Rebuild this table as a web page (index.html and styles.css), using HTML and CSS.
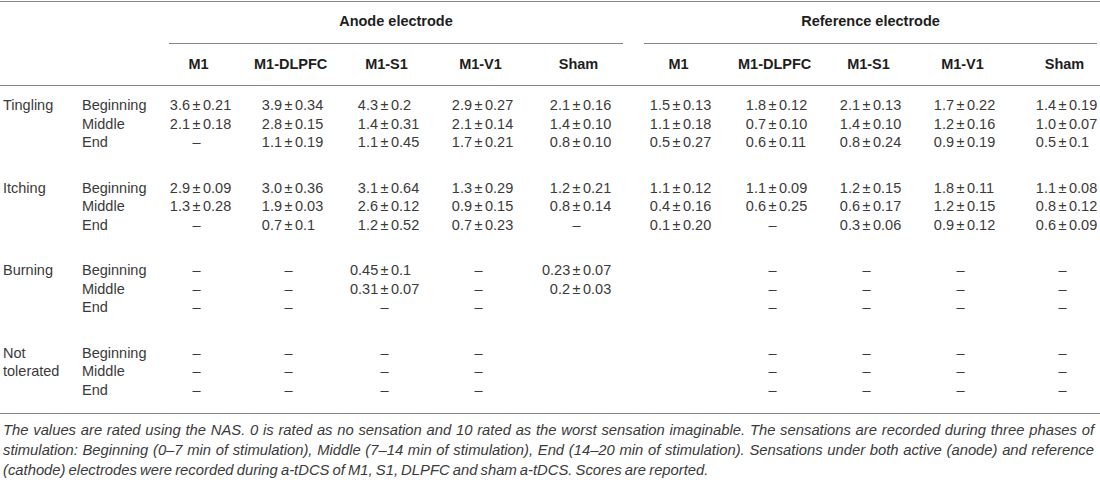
FILE: index.html
```html
<!DOCTYPE html>
<html>
  <head>
    <meta charset="UTF-8">
    <link rel="stylesheet" href="styles.css">
  </head>
  <body>
    <main>
      <table class="sensations">
        <colgroup>
          <col><col><col><col><col><col><col><col><col><col><col><col>
        </colgroup>
        <thead>
          <tr class="groups">
            <th colspan="2"></th>
            <th colspan="5" class="anode"><div>Anode electrode</div></th>
            <th colspan="5" class="reference"><div>Reference electrode</div></th>
          </tr>
          <tr class="sites">
            <th></th>
            <th></th>
            <th><span>M1</span></th>
            <th><span>M1-DLPFC</span></th>
            <th><span>M1-S1</span></th>
            <th><span>M1-V1</span></th>
            <th><span>Sham</span></th>
            <th><span>M1</span></th>
            <th><span>M1-DLPFC</span></th>
            <th><span>M1-S1</span></th>
            <th><span>M1-V1</span></th>
            <th><span>Sham</span></th>
          </tr>
        </thead>
        <tbody>
          <tr>
            <td rowspan="3" class="sense">Tingling</td>
            <td class="phase">Beginning</td>
            <td><span class="n">3.6</span> ± 0.21</td>
            <td><span class="n">3.9</span> ± 0.34</td>
            <td><span class="n">4.3</span> ± 0.2</td>
            <td><span class="n">2.9</span> ± 0.27</td>
            <td><span class="n">2.1</span> ± 0.16</td>
            <td><span class="n">1.5</span> ± 0.13</td>
            <td><span class="n">1.8</span> ± 0.12</td>
            <td><span class="n">2.1</span> ± 0.13</td>
            <td><span class="n">1.7</span> ± 0.22</td>
            <td><span class="n">1.4</span> ± 0.19</td>
          </tr>
          <tr>
            <td class="phase">Middle</td>
            <td><span class="n">2.1</span> ± 0.18</td>
            <td><span class="n">2.8</span> ± 0.15</td>
            <td><span class="n">1.4</span> ± 0.31</td>
            <td><span class="n">2.1</span> ± 0.14</td>
            <td><span class="n">1.4</span> ± 0.10</td>
            <td><span class="n">1.1</span> ± 0.18</td>
            <td><span class="n">0.7</span> ± 0.10</td>
            <td><span class="n">1.4</span> ± 0.10</td>
            <td><span class="n">1.2</span> ± 0.16</td>
            <td><span class="n">1.0</span> ± 0.07</td>
          </tr>
          <tr>
            <td class="phase">End</td>
            <td><span class="n"></span> –</td>
            <td><span class="n">1.1</span> ± 0.19</td>
            <td><span class="n">1.1</span> ± 0.45</td>
            <td><span class="n">1.7</span> ± 0.21</td>
            <td><span class="n">0.8</span> ± 0.10</td>
            <td><span class="n">0.5</span> ± 0.27</td>
            <td><span class="n">0.6</span> ± 0.11</td>
            <td><span class="n">0.8</span> ± 0.24</td>
            <td><span class="n">0.9</span> ± 0.19</td>
            <td><span class="n">0.5</span> ± 0.1</td>
          </tr>
        </tbody>
        <tbody>
          <tr>
            <td rowspan="3" class="sense">Itching</td>
            <td class="phase">Beginning</td>
            <td><span class="n">2.9</span> ± 0.09</td>
            <td><span class="n">3.0</span> ± 0.36</td>
            <td><span class="n">3.1</span> ± 0.64</td>
            <td><span class="n">1.3</span> ± 0.29</td>
            <td><span class="n">1.2</span> ± 0.21</td>
            <td><span class="n">1.1</span> ± 0.12</td>
            <td><span class="n">1.1</span> ± 0.09</td>
            <td><span class="n">1.2</span> ± 0.15</td>
            <td><span class="n">1.8</span> ± 0.11</td>
            <td><span class="n">1.1</span> ± 0.08</td>
          </tr>
          <tr>
            <td class="phase">Middle</td>
            <td><span class="n">1.3</span> ± 0.28</td>
            <td><span class="n">1.9</span> ± 0.03</td>
            <td><span class="n">2.6</span> ± 0.12</td>
            <td><span class="n">0.9</span> ± 0.15</td>
            <td><span class="n">0.8</span> ± 0.14</td>
            <td><span class="n">0.4</span> ± 0.16</td>
            <td><span class="n">0.6</span> ± 0.25</td>
            <td><span class="n">0.6</span> ± 0.17</td>
            <td><span class="n">1.2</span> ± 0.15</td>
            <td><span class="n">0.8</span> ± 0.12</td>
          </tr>
          <tr>
            <td class="phase">End</td>
            <td><span class="n"></span> –</td>
            <td><span class="n">0.7</span> ± 0.1</td>
            <td><span class="n">1.2</span> ± 0.52</td>
            <td><span class="n">0.7</span> ± 0.23</td>
            <td><span class="n"></span> –</td>
            <td><span class="n">0.1</span> ± 0.20</td>
            <td><span class="n"></span> –</td>
            <td><span class="n">0.3</span> ± 0.06</td>
            <td><span class="n">0.9</span> ± 0.12</td>
            <td><span class="n">0.6</span> ± 0.09</td>
          </tr>
        </tbody>
        <tbody>
          <tr>
            <td rowspan="3" class="sense">Burning</td>
            <td class="phase">Beginning</td>
            <td><span class="n"></span> –</td>
            <td><span class="n"></span> –</td>
            <td><span class="n">0.45</span> ± 0.1</td>
            <td><span class="n"></span> –</td>
            <td><span class="n">0.23</span> ± 0.07</td>
            <td></td>
            <td><span class="n"></span> –</td>
            <td><span class="n"></span> –</td>
            <td><span class="n"></span> –</td>
            <td><span class="n"></span> –</td>
          </tr>
          <tr>
            <td class="phase">Middle</td>
            <td><span class="n"></span> –</td>
            <td><span class="n"></span> –</td>
            <td><span class="n">0.31</span> ± 0.07</td>
            <td><span class="n"></span> –</td>
            <td><span class="n">0.2</span> ± 0.03</td>
            <td></td>
            <td><span class="n"></span> –</td>
            <td><span class="n"></span> –</td>
            <td><span class="n"></span> –</td>
            <td><span class="n"></span> –</td>
          </tr>
          <tr>
            <td class="phase">End</td>
            <td><span class="n"></span> –</td>
            <td><span class="n"></span> –</td>
            <td><span class="n"></span> –</td>
            <td><span class="n"></span> –</td>
            <td></td>
            <td></td>
            <td><span class="n"></span> –</td>
            <td><span class="n"></span> –</td>
            <td><span class="n"></span> –</td>
            <td><span class="n"></span> –</td>
          </tr>
        </tbody>
        <tbody>
          <tr>
            <td rowspan="3" class="sense">Not tolerated</td>
            <td class="phase">Beginning</td>
            <td><span class="n"></span> –</td>
            <td><span class="n"></span> –</td>
            <td><span class="n"></span> –</td>
            <td><span class="n"></span> –</td>
            <td></td>
            <td></td>
            <td><span class="n"></span> –</td>
            <td><span class="n"></span> –</td>
            <td><span class="n"></span> –</td>
            <td><span class="n"></span> –</td>
          </tr>
          <tr>
            <td class="phase">Middle</td>
            <td><span class="n"></span> –</td>
            <td><span class="n"></span> –</td>
            <td><span class="n"></span> –</td>
            <td><span class="n"></span> –</td>
            <td></td>
            <td></td>
            <td><span class="n"></span> –</td>
            <td><span class="n"></span> –</td>
            <td><span class="n"></span> –</td>
            <td><span class="n"></span> –</td>
          </tr>
          <tr>
            <td class="phase">End</td>
            <td><span class="n"></span> –</td>
            <td><span class="n"></span> –</td>
            <td><span class="n"></span> –</td>
            <td><span class="n"></span> –</td>
            <td></td>
            <td></td>
            <td><span class="n"></span> –</td>
            <td><span class="n"></span> –</td>
            <td><span class="n"></span> –</td>
            <td><span class="n"></span> –</td>
          </tr>
        </tbody>
      </table>
      <p class="note">The values are rated using the NAS. 0 is rated as no sensation and 10 rated as the worst sensation imaginable. The sensations are recorded during three phases of stimulation: Beginning (0–7 min of stimulation), Middle (7–14 min of stimulation), End (14–20 min of stimulation). Sensations under both active (anode) and reference (cathode) electrodes were recorded during a-tDCS of M1, S1, DLPFC and sham a-tDCS. Scores are reported.</p>
    </main>
  </body>
</html>
```

FILE: styles.css
```css
html, body {
  margin: 0;
  padding: 0;
  background: #fff;
  font-family: "Liberation Sans", Arial, Helvetica, sans-serif;
  font-size: 14.5px;
  color: #3a3a3a;
}
main {
  width: 1100px;
  padding-top: 1px;
}
.sensations {
  width: 1100px;
  table-layout: fixed;
  border-collapse: separate;
  border-spacing: 0;
  border-top: 1px solid #858585;
  border-bottom: 1px solid #858585;
}
.sensations col:nth-child(1) { width: 80px; }
.sensations col:nth-child(2) { width: 82px; }
.sensations col:nth-child(3) { width: 92px; }
.sensations col:nth-child(4) { width: 96px; }
.sensations col:nth-child(5) { width: 94px; }
.sensations col:nth-child(6) { width: 98px; }
.sensations col:nth-child(7) { width: 100px; }
.sensations col:nth-child(8) { width: 96px; }
.sensations col:nth-child(9) { width: 94px; }
.sensations col:nth-child(10) { width: 94px; }
.sensations col:nth-child(11) { width: 102px; }
.sensations col:nth-child(12) { width: 72px; }

th {
  padding: 0;
  font-weight: bold;
  color: #1e1e1e;
  line-height: 18px;
}
.groups th {
  vertical-align: bottom;
}
.groups div {
  padding: 10px 0 13px;
  border-bottom: 1px solid #858585;
  text-align: center;
}
.groups .anode {
  padding: 0 19px 0 7px;
}
.groups .reference {
  padding: 0 3px 0 2px;
}
.sites th {
  padding: 11px 0 12px;
  text-align: left;
  border-bottom: 1px solid #858585;
}
.sites th span {
  display: inline-block;
  width: 73px;
  text-align: center;
  white-space: nowrap;
}

td {
  padding: 0;
  height: 18.5px;
  line-height: 18.5px;
  white-space: nowrap;
  word-spacing: -1.5px;
  vertical-align: top;
}
tbody tr:first-child td {
  padding-top: 27px;
}
tbody:first-of-type tr:first-child td {
  padding-top: 10px;
}
tbody:last-of-type tr:last-child td {
  padding-bottom: 14px;
}
td.sense {
  padding-left: 3px;
  white-space: normal;
  word-spacing: normal;
}
td.phase {
  padding-left: 2px;
}
.n {
  display: inline-block;
  width: 28px;
  text-align: right;
}

.note {
  margin: 6px 0 0;
  padding: 0 6px 0 3px;
  font-size: 14.8px;
  word-spacing: -1px;
  font-style: italic;
  line-height: 20px;
  text-align: justify;
  color: #3a3a3a;
}
```
